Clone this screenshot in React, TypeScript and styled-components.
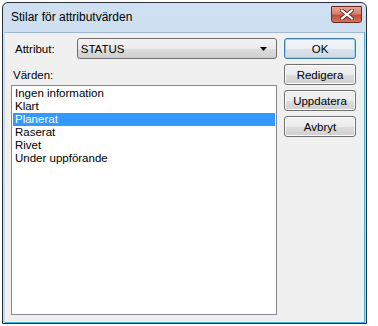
import styled, { createGlobalStyle } from "styled-components";

const GlobalStyle = createGlobalStyle`
  html, body {
    margin: 0;
    padding: 0;
    background: #ffffff;
  }
  body {
    font-family: "Liberation Sans", Arial, sans-serif;
  }
`;

const items = [
  "Ingen information",
  "Klart",
  "Planerat",
  "Raserat",
  "Rivet",
  "Under uppförande",
];

export default function App() {
  const selected = "Planerat";

  return (
    <Page>
      <GlobalStyle />
      <Window>
        <TitleBar>
          <Title>Stilar för attributvärden</Title>
          <CloseButton>
            <svg width="14" height="11" viewBox="0 0 14 11">
              <path
                d="M2 1.5 L12 9.5 M12 1.5 L2 9.5"
                stroke="#5a2a2a"
                strokeWidth="4"
                strokeLinecap="square"
              />
              <path
                d="M2 1.5 L12 9.5 M12 1.5 L2 9.5"
                stroke="#ffffff"
                strokeWidth="2.2"
                strokeLinecap="square"
              />
            </svg>
          </CloseButton>
        </TitleBar>
        <Client>
          <LeftColumn>
            <AttrRow>
              <Label>Attribut:</Label>
              <Combo>
                <span>STATUS</span>
                <svg width="7" height="4" viewBox="0 0 7 4">
                  <path d="M0 0 H7 L3.5 4 Z" fill="#000" />
                </svg>
              </Combo>
            </AttrRow>
            <SectionLabel>Värden:</SectionLabel>
            <ListBox>
              {items.map((item) => (
                <ListItem key={item} $selected={item === selected}>
                  {item}
                </ListItem>
              ))}
            </ListBox>
          </LeftColumn>
          <ButtonColumn>
            <Button $default>OK</Button>
            <Button>Redigera</Button>
            <Button>Uppdatera</Button>
            <Button>Avbryt</Button>
          </ButtonColumn>
        </Client>
      </Window>
    </Page>
  );
}

const Page = styled.div`
  padding: 2px 0 0 2px;
`;

const Window = styled.div`
  width: 363px;
  height: 320px;
  border: 1px solid #2a2f36;
  border-radius: 6px 6px 0 0;
  background: linear-gradient(#cfe0f2, #bcd3eb);
  display: flex;
  flex-direction: column;
  overflow: hidden;
`;

const TitleBar = styled.div`
  height: 29px;
  display: flex;
  align-items: center;
  justify-content: space-between;
  padding: 0 4px 0 8px;
`;

const Title = styled.div`
  font-size: 12px;
  color: #000;
  margin-top: -1px;
`;

const CloseButton = styled.div`
  width: 29px;
  height: 15px;
  margin-top: -6px;
  border: 1px solid #6b2a25;
  border-radius: 0 0 3px 3px;
  background: linear-gradient(#e8a493 0%, #d7826f 45%, #c24f38 55%, #d0735d 100%);
  display: flex;
  align-items: center;
  justify-content: center;
`;

const Client = styled.div`
  flex: 1;
  margin: 0 1px 0 1px;
  background: #f0f0f0;
  border-bottom: 1px solid #3ab7e6;
  border-right: 1px solid #3ab7e6;
  border-left: 1px solid #c9dcf0;
  border-top: 1px solid #9fb8d3;
  display: flex;
  padding: 5px 0 0 6px;
  gap: 7px;
`;

const LeftColumn = styled.div`
  width: 266px;
  display: flex;
  flex-direction: column;
`;

const AttrRow = styled.div`
  display: flex;
  align-items: center;
  height: 21px;
`;

const Label = styled.div`
  width: 62px;
  padding-left: 4px;
  font-size: 11.5px;
  color: #000;
`;

const Combo = styled.div`
  width: 187px;
  height: 19px;
  border: 1px solid #707070;
  border-radius: 3px;
  background: linear-gradient(#f2f2f2 0%, #ebebeb 50%, #dddddd 51%, #cfcfcf 100%);
  display: flex;
  align-items: center;
  justify-content: space-between;
  padding: 0 9px 0 3px;
  font-size: 11.5px;
  color: #000;
`;

const SectionLabel = styled.div`
  margin: 10px 0 4px 2px;
  line-height: 12px;
  font-size: 11.5px;
  color: #000;
`;

const ListBox = styled.div`
  height: 226px;
  border: 1px solid #828790;
  background: #fff;
  padding: 1px;
`;

const ListItem = styled.div<{ $selected?: boolean }>`
  height: 13px;
  line-height: 13px;
  padding-left: 2px;
  font-size: 11.5px;
  color: ${(p) => (p.$selected ? "#fff" : "#000")};
  background: ${(p) => (p.$selected ? "#3399ff" : "transparent")};
`;

const ButtonColumn = styled.div`
  display: flex;
  flex-direction: column;
  gap: 5px;
`;

const Button = styled.div<{ $default?: boolean }>`
  width: 70px;
  height: 19px;
  border: 1px solid ${(p) => (p.$default ? "#3c7fb1" : "#707070")};
  border-radius: 3px;
  background: ${(p) =>
    p.$default
      ? "linear-gradient(#f3f6f9 0%, #eaeff4 50%, #dce3ea 51%, #d0d9e2 100%)"
      : "linear-gradient(#f2f2f2 0%, #ebebeb 50%, #dddddd 51%, #cfcfcf 100%)"};
  box-shadow: inset 0 0 0 1px ${(p) => (p.$default ? "#8fd4f5" : "#fcfcfc")};
  display: flex;
  align-items: center;
  justify-content: center;
  font-size: 11.5px;
  color: #000;
`;
